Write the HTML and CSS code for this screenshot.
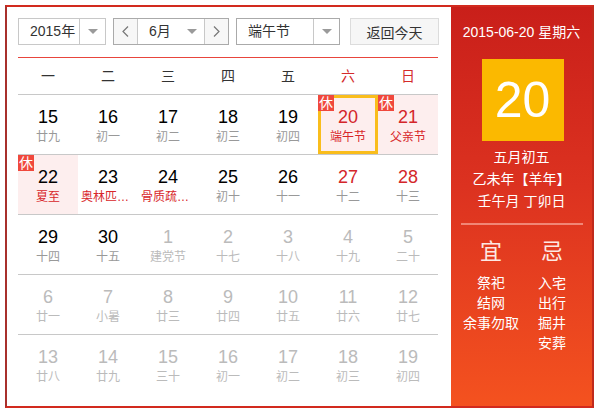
FILE: index.html
```html
<!DOCTYPE html>
<html lang="zh-CN">
<head>
<meta charset="utf-8">
<title>万年历</title>
<link rel="stylesheet" href="styles.css">
</head>
<body>
<div class="cal">
  <div class="main">
    <div class="toolbar">
      <div class="select year"><span class="sel-text">2015年</span><span class="sel-arrow divided"><i class="tri"></i></span></div>
      <div class="month-group">
        <span class="nav prev"><svg width="7" height="11" viewBox="0 0 7 11"><polyline points="6,0.5 1,5.5 6,10.5" fill="none" stroke="#777" stroke-width="1.2"/></svg></span>
        <span class="month"><span class="sel-text">6月</span><span class="sel-arrow"><i class="tri"></i></span></span>
        <span class="nav next"><svg width="7" height="11" viewBox="0 0 7 11"><polyline points="1,0.5 6,5.5 1,10.5" fill="none" stroke="#777" stroke-width="1.2"/></svg></span>
      </div>
      <div class="select fest"><span class="sel-text">端午节</span><span class="sel-arrow divided"><i class="tri"></i></span></div>
      <div class="today-btn">返回今天</div>
    </div>
    <div class="weekhead">
      <span>一</span><span>二</span><span>三</span><span>四</span><span>五</span><span class="we">六</span><span class="we">日</span>
    </div>
    <div class="grid">
      <div class="row">
        <div class="cell"><b>15</b><em>廿九</em></div>
        <div class="cell"><b>16</b><em>初一</em></div>
        <div class="cell"><b>17</b><em>初二</em></div>
        <div class="cell"><b>18</b><em>初三</em></div>
        <div class="cell"><b>19</b><em>初四</em></div>
        <div class="cell hol we sel"><span class="rest">休</span><b>20</b><em class="fes">端午节</em></div>
        <div class="cell hol we"><span class="rest">休</span><b>21</b><em class="fes">父亲节</em></div>
      </div>
      <div class="row">
        <div class="cell hol"><span class="rest">休</span><b>22</b><em class="fes">夏至</em></div>
        <div class="cell"><b>23</b><em class="fes">奥林匹克日</em></div>
        <div class="cell"><b>24</b><em class="fes">骨质疏松日</em></div>
        <div class="cell"><b>25</b><em>初十</em></div>
        <div class="cell"><b>26</b><em>十一</em></div>
        <div class="cell we"><b>27</b><em>十二</em></div>
        <div class="cell we"><b>28</b><em>十三</em></div>
      </div>
      <div class="row">
        <div class="cell"><b>29</b><em>十四</em></div>
        <div class="cell"><b>30</b><em>十五</em></div>
        <div class="cell other"><b>1</b><em>建党节</em></div>
        <div class="cell other"><b>2</b><em>十七</em></div>
        <div class="cell other"><b>3</b><em>十八</em></div>
        <div class="cell other"><b>4</b><em>十九</em></div>
        <div class="cell other"><b>5</b><em>二十</em></div>
      </div>
      <div class="row">
        <div class="cell other"><b>6</b><em>廿一</em></div>
        <div class="cell other"><b>7</b><em>小暑</em></div>
        <div class="cell other"><b>8</b><em>廿三</em></div>
        <div class="cell other"><b>9</b><em>廿四</em></div>
        <div class="cell other"><b>10</b><em>廿五</em></div>
        <div class="cell other"><b>11</b><em>廿六</em></div>
        <div class="cell other"><b>12</b><em>廿七</em></div>
      </div>
      <div class="row last">
        <div class="cell other"><b>13</b><em>廿八</em></div>
        <div class="cell other"><b>14</b><em>廿九</em></div>
        <div class="cell other"><b>15</b><em>三十</em></div>
        <div class="cell other"><b>16</b><em>初一</em></div>
        <div class="cell other"><b>17</b><em>初二</em></div>
        <div class="cell other"><b>18</b><em>初三</em></div>
        <div class="cell other"><b>19</b><em>初四</em></div>
      </div>
    </div>
  </div>
  <div class="side">
    <div class="side-date">2015-06-20 星期六</div>
    <div class="big-day">20</div>
    <div class="lunar">
      <div>五月初五</div>
      <div>乙未年【羊年】</div>
      <div>壬午月 丁卯日</div>
    </div>
    <div class="divider"></div>
    <div class="yiji">
      <div class="col">
        <div class="yj-title">宜</div>
        <div>祭祀</div>
        <div>结网</div>
        <div>余事勿取</div>
      </div>
      <div class="col">
        <div class="yj-title">忌</div>
        <div>入宅</div>
        <div>出行</div>
        <div>掘井</div>
        <div>安葬</div>
      </div>
    </div>
  </div>
</div>
</body>
</html>
```

FILE: styles.css
```css
* { box-sizing: border-box; }
html, body { margin: 0; padding: 0; }
body {
  background: #fff;
  font-family: "Liberation Sans", "Noto Sans CJK SC", sans-serif;
  color: #333;
  width: 600px;
  height: 413px;
  overflow: hidden;
}
.cal {
  margin: 5px 0 0 5px;
  width: 589px;
  height: 403px;
  border: 2px solid #d22a1e;
  border-left-color: #a8302c;
  border-right-color: #c02a1c;
  display: flex;
}
.main {
  width: 444px;
  padding: 11px 0 0 11px;
}
.toolbar {
  display: flex;
  height: 27px;
  font-size: 14px;
}
.select, .month-group, .today-btn {
  height: 27px;
  border: 1px solid #c8c8c8;
  display: flex;
  align-items: center;
  background: #fff;
}
.sel-text {
  flex: 1;
  padding-left: 11px;
  line-height: 25px;
  color: #333;
}
.sel-arrow {
  width: 26px;
  height: 25px;
  display: flex;
  align-items: center;
  justify-content: center;
}
.sel-arrow.divided { border-left: 1px solid #c8c8c8; }
.tri {
  display: block;
  width: 0;
  height: 0;
  border-left: 5px solid transparent;
  border-right: 5px solid transparent;
  border-top: 5px solid #9a9a9a;
}
.year { width: 88px; }
.month-group {
  width: 116px;
  margin-left: 7px;
  border-color: #aaa;
}
.nav {
  width: 24px;
  height: 25px;
  background: #f7f7f7;
  display: flex;
  align-items: center;
  justify-content: center;
}
.prev { border-right: 1px solid #c8c8c8; }
.next { border-left: 1px solid #c8c8c8; }
.month {
  flex: 1;
  display: flex;
  align-items: center;
  height: 25px;
}
.month .sel-arrow { width: 24px; }
.fest {
  width: 104px;
  margin-left: 7px;
  border-color: #aaa;
}
.today-btn {
  width: 89px;
  margin-left: 10px;
  background: #f6f6f6;
  border-color: #dcdcdc;
  justify-content: center;
  color: #333;
  font-size: 14px;
}
.weekhead {
  width: 420px;
  margin-top: 12px;
  border-top: 1px solid #e8453c;
  border-bottom: 1px solid #c8c8c8;
  height: 38px;
  display: grid;
  grid-template-columns: repeat(7, 60px);
  align-items: center;
  font-size: 14px;
  color: #333;
}
.weekhead span { text-align: center; line-height: 36px; }
.weekhead .we { color: #d42a2a; }
.grid { width: 420px; }
.row {
  display: grid;
  grid-template-columns: repeat(7, 60px);
  height: 60px;
  border-bottom: 1px solid #c8c8c8;
}
.row.last { border-bottom: none; }
.cell {
  position: relative;
  height: 59px;
  padding: 10px 3px 0;
  text-align: center;
}
.cell b {
  display: block;
  font-weight: normal;
  font-size: 18px;
  line-height: 24px;
  color: #000;
}
.cell em {
  display: block;
  font-style: normal;
  font-size: 12px;
  line-height: 16px;
  color: #999;
  white-space: nowrap;
  overflow: hidden;
  text-overflow: ellipsis;
}
.cell.we b { color: #d4262a; }
.cell em.fes { color: #d8262a; }
.cell.hol { background: #fdeeee; }
.cell.other b, .cell.other em { color: #bbb; }
.cell.sel {
  border: 3px solid #f9bd1c;
  padding-top: 7px;
}
.rest {
  position: absolute;
  left: 0;
  top: 0;
  width: 16px;
  height: 16px;
  background: #f0483c;
  color: #fff;
  font-size: 14px;
  line-height: 16px;
  text-align: center;
}
.cell.sel .rest { left: -3px; top: -3px; }
.side {
  width: 141px;
  background: linear-gradient(#c91f1a, #dc3220 45%, #f4521f);
  color: #fff;
  display: flex;
  flex-direction: column;
  align-items: center;
  padding-top: 15px;
}
.side-date {
  font-size: 14px;
  line-height: 20px;
}
.big-day {
  margin-top: 17px;
  margin-left: 2px;
  width: 82px;
  height: 82px;
  background: #fbb900;
  color: #fff;
  font-size: 50px;
  line-height: 82px;
  text-align: center;
}
.lunar {
  margin-top: 5px;
  font-size: 14px;
  line-height: 22px;
  text-align: center;
}
.divider {
  margin-top: 11px;
  width: 122px;
  height: 2px;
  background: rgba(255, 200, 190, 0.55);
}
.yiji {
  margin-top: 13px;
  display: flex;
  font-size: 14px;
  line-height: 20px;
}
.yiji .col {
  width: 61px;
  text-align: center;
}
.yj-title {
  font-size: 22px;
  line-height: 28px;
  margin-bottom: 7px;
  color: #fde8e4;
}
```
